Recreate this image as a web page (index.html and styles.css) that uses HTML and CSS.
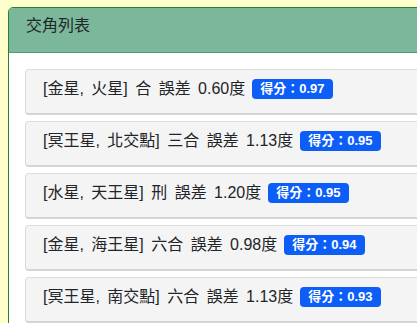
FILE: index.html
```html
<!DOCTYPE html>
<html lang="zh-Hant">
<head>
<meta charset="utf-8">
<link rel="stylesheet" href="styles.css">
</head>
<body>
<div class="card">
  <div class="card-header">交角列表</div>
  <div class="card-body">
    <ul class="list">
      <li class="item"><span class="text">[金星, 火星] 合 誤差 0.60度</span><span class="badge">得分：0.97</span></li>
      <li class="item"><span class="text">[冥王星, 北交點] 三合 誤差 1.13度</span><span class="badge">得分：0.95</span></li>
      <li class="item"><span class="text">[水星, 天王星] 刑 誤差 1.20度</span><span class="badge">得分：0.95</span></li>
      <li class="item"><span class="text">[金星, 海王星] 六合 誤差 0.98度</span><span class="badge">得分：0.94</span></li>
      <li class="item"><span class="text">[冥王星, 南交點] 六合 誤差 1.13度</span><span class="badge">得分：0.93</span></li>
    </ul>
  </div>
</div>
</body>
</html>
```
FILE: styles.css
```css
html, body {
  margin: 0;
  padding: 0;
  background: #ffffcc;
  overflow: hidden;
}
body {
  padding: 7px 0 0 8px;
  font-family: "Liberation Sans", "Noto Sans CJK TC", sans-serif;
  color: #212529;
}
.card {
  width: 520px;
  border: 1px solid #2e7d32;
  border-radius: 5px;
  background: #fff;
  overflow: hidden;
}
.card-header {
  height: 45px;
  box-sizing: border-box;
  background: #7bb89b;
  border-bottom: 1px solid #4f9a72;
  padding: 6px 17px 0;
  font-size: 16px;
  line-height: 24px;
}
.card-body {
  padding: 16px;
}
.list {
  list-style: none;
  margin: 0;
  padding: 0;
  display: flex;
  flex-direction: column;
  gap: 6px;
}
.item {
  height: 46px;
  box-sizing: border-box;
  background: #f4f4f4;
  border: 1px solid #dcdcdc;
  border-bottom: 2px solid #d4d4d4;
  border-radius: 4px;
  padding: 7px 17px 0;
  display: flex;
  align-items: flex-start;
  gap: 7px;
  font-size: 16px;
  line-height: 24px;
}
.text {
  word-spacing: 3px;
}
.badge {
  margin-top: 2px;
  height: 20px;
  line-height: 20px;
  padding: 0 8px;
  background: #0d5ef7;
  color: #fff;
  font-family: "Liberation Sans", "Noto Sans CJK SC", sans-serif;
  font-weight: bold;
  font-size: 13px;
  border-radius: 4px;
}
```
